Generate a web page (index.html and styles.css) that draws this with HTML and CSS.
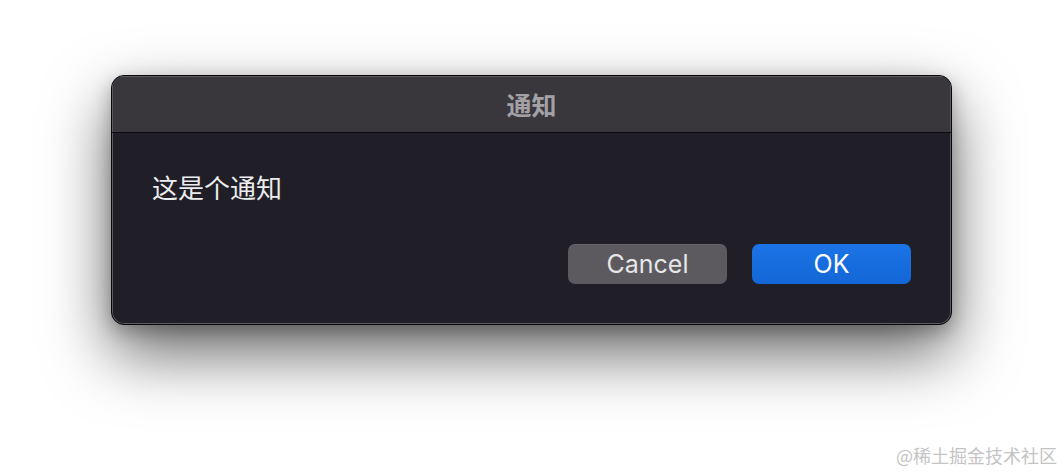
FILE: index.html
```html
<!DOCTYPE html>
<html lang="zh-CN">
<head>
<meta charset="utf-8">
<title>通知</title>
<link rel="stylesheet" href="styles.css">
</head>
<body>
<div class="stage">
  <div class="dialog">
    <div class="titlebar">通知</div>
    <div class="content">
      <p class="message">这是个通知</p>
      <div class="actions">
        <button class="btn btn-cancel">Cancel</button>
        <button class="btn btn-ok">OK</button>
      </div>
    </div>
  </div>
</div>
<div class="watermark">@稀土掘金技术社区</div>
</body>
</html>
```
FILE: styles.css
```css
html, body {
  margin: 0;
  padding: 0;
  background: #ffffff;
  width: 1064px;
  height: 472px;
  overflow: hidden;
  font-family: "Noto Sans CJK SC", "Noto Sans", sans-serif;
}
.stage {
  padding: 75px 0 0 111px;
}
.dialog {
  width: 841px;
  height: 250px;
  box-sizing: border-box;
  border: 1px solid #08070a;
  border-radius: 13px;
  background: #201e26;
  box-shadow: inset 0 0 0 1px #5d5b61, 0 28px 65px rgba(0, 0, 0, 0.6), 0 6px 18px rgba(0, 0, 0, 0.25);
  overflow: hidden;
  display: flex;
  flex-direction: column;
}
.titlebar {
  height: 57px;
  box-sizing: border-box;
  background: #39373c;
  border-bottom: 1px solid #0c0b0f;
  box-shadow: inset 0 1px 0 #5d5b61, inset 1px 0 0 #5d5b61, inset -1px 0 0 #5d5b61;
  color: #a3a1a6;
  font-size: 25px;
  font-weight: 700;
  display: flex;
  align-items: center;
  justify-content: center;
}
.content {
  flex: 1;
  display: flex;
  flex-direction: column;
  padding: 0 40px 0 40px;
}
.message {
  margin: 37px 0 0 0;
  color: #ececee;
  font-size: 26px;
  line-height: 34px;
}
.actions {
  margin-top: 40px;
  display: flex;
  justify-content: flex-end;
  gap: 25px;
}
.btn {
  width: 159px;
  height: 40px;
  border: none;
  border-radius: 7px;
  font-family: "Inter", "Noto Sans", sans-serif;
  font-size: 25px;
  padding: 0;
  line-height: 40px;
}
.btn-cancel {
  background: #5c5a5f;
  color: #e6e6e8;
  box-shadow: inset 0 1px 0 rgba(255,255,255,0.08);
}
.btn-ok {
  background: linear-gradient(#1c74e6, #1366d6);
  color: #ffffff;
}
.watermark {
  position: absolute;
  right: 7px;
  bottom: 4px;
  color: #c4c4c4;
  font-size: 18px;
}
```
